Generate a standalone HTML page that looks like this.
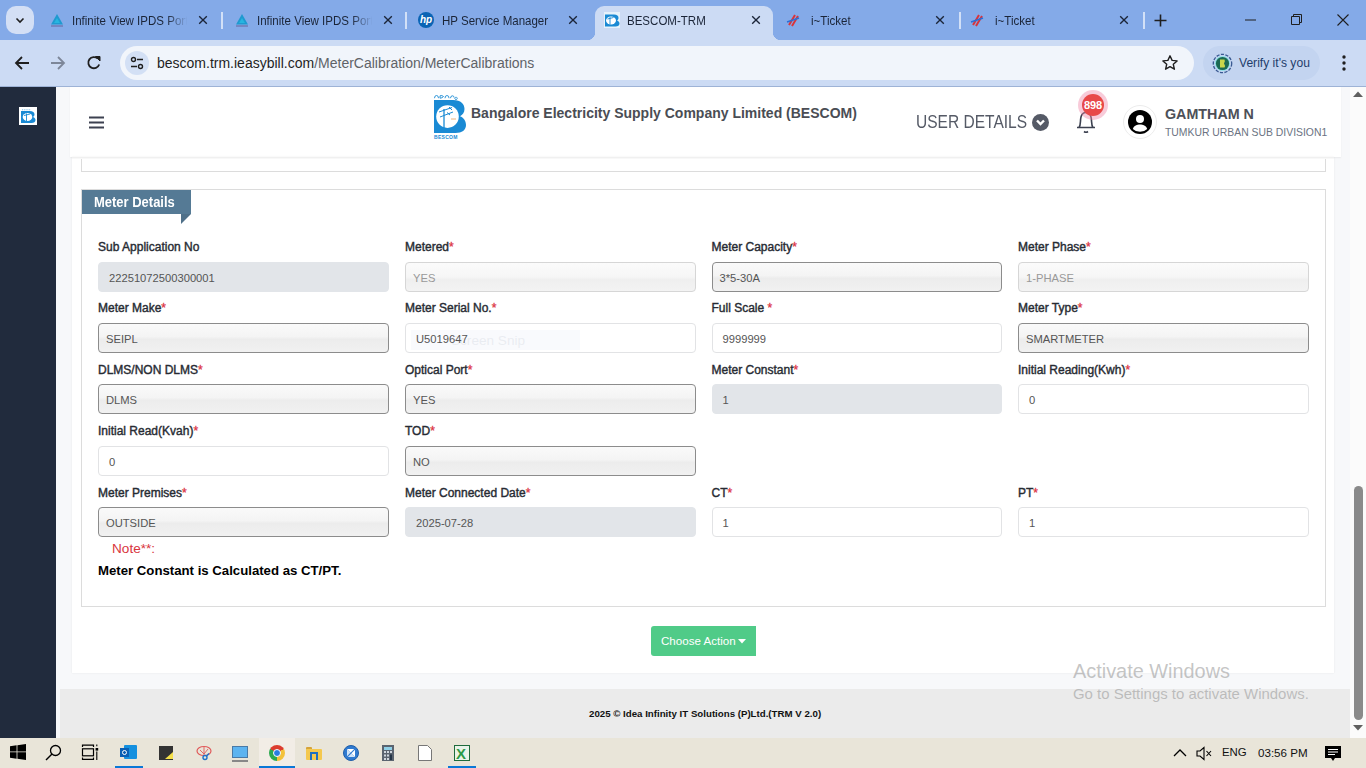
<!DOCTYPE html>
<html><head><meta charset="utf-8">
<style>
*{margin:0;padding:0;box-sizing:border-box}
html,body{width:1366px;height:768px;overflow:hidden;font-family:"Liberation Sans",sans-serif;background:#fff}
.a{position:absolute}
#tabs{left:0;top:0;width:1366px;height:40px;background:#84aae8}
#toolbar{left:0;top:40px;width:1366px;height:47px;background:#ccdbf4;border-bottom:1px solid #9eb3d6}
.tab{position:absolute;top:0;height:40px;font-size:12.4px;color:#1f1f1f}
.tab .t{position:absolute;top:13.5px;white-space:nowrap;overflow:hidden;color:#1b2538;transform:scaleX(0.93);transform-origin:0 0}
.tab .t.f{-webkit-mask-image:linear-gradient(to right,#000 82%,transparent 100%)}
.sep{position:absolute;top:12px;width:2px;height:17px;background:#d2e0f7}
#page{left:0;top:87px;width:1366px;height:651px;background:#f5f6fa;overflow:hidden}
#side{left:0;top:0;width:56px;height:651px;background:#1e293b}
#taskbar{left:0;top:738px;width:1366px;height:30px;background:#e9e5d9}
.lbl{position:absolute;font-size:12px;color:#272b33;-webkit-text-stroke:0.4px #272b33;white-space:nowrap}
.lbl i{font-style:normal;color:#dc3545;-webkit-text-stroke:0.3px #dc3545}
.inp{position:absolute;width:291px;height:30.4px;border:1px solid #e2e3e5;border-radius:4px;background:#fff;font-size:11.2px;color:#555;padding:8.5px 0 0 10px;white-space:nowrap}
.inp.ro{background:#e2e5e9;border-color:#e2e5e9}
.inp.sel{border-color:#8c8c8c;background:linear-gradient(#fafafa,#f4f4f4 45%,#ececec 55%,#f1f1f1);padding-left:7px}
.inp.dis{border-color:#d6d6d6;background:linear-gradient(#fbfbfb,#f6f6f6 50%,#efefef 60%,#f3f3f3);color:#999;padding-left:7px}
</style></head><body>
<!-- TAB STRIP -->
<div id="tabs" class="a">
  <div class="a" style="left:6px;top:6px;width:28px;height:28px;border-radius:10px;background:#d3dff5"></div>
  <svg class="a" style="left:14px;top:14px" width="12" height="12" viewBox="0 0 12 12"><path d="M2.5 4.5L6 8l3.5-3.5" stroke="#1f1f1f" stroke-width="1.6" fill="none"/></svg>

  <div class="tab" style="left:40px;width:182px">
    <svg class="a" style="left:9px;top:12px" width="16" height="16" viewBox="0 0 16 16"><path d="M8 2L14 12.5H2z" fill="#1f9ad0"/><path d="M8 6L11 11H5z" fill="#27b5e0"/><path d="M2 14H14" stroke="#6a6fa8" stroke-width="1.2"/></svg>
    <div class="t f" style="left:32px;width:124px">Infinite View IPDS Portal</div>
    <svg class="a" style="left:158px;top:15px" width="10" height="10" viewBox="0 0 10 10"><path d="M1.2 1.2L8.8 8.8M8.8 1.2L1.2 8.8" stroke="#1b2538" stroke-width="1.35"/></svg>
  </div>
  <div class="sep" style="left:221px"></div>
  <div class="tab" style="left:225px;width:182px">
    <svg class="a" style="left:9px;top:12px" width="16" height="16" viewBox="0 0 16 16"><path d="M8 2L14 12.5H2z" fill="#1f9ad0"/><path d="M8 6L11 11H5z" fill="#27b5e0"/><path d="M2 14H14" stroke="#6a6fa8" stroke-width="1.2"/></svg>
    <div class="t f" style="left:32px;width:124px">Infinite View IPDS Portal</div>
    <svg class="a" style="left:158px;top:15px" width="10" height="10" viewBox="0 0 10 10"><path d="M1.2 1.2L8.8 8.8M8.8 1.2L1.2 8.8" stroke="#1b2538" stroke-width="1.35"/></svg>
  </div>
  <div class="sep" style="left:405px"></div>
  <div class="tab" style="left:410px;width:182px">
    <div class="a" style="left:8px;top:12px;width:16px;height:16px;border-radius:50%;background:#0a64b4;color:#fff;font-size:10px;font-style:italic;font-weight:bold;text-align:center;line-height:16px">hp</div>
    <div class="t" style="left:32px;width:120px">HP Service Manager</div>
    <svg class="a" style="left:158px;top:15px" width="10" height="10" viewBox="0 0 10 10"><path d="M1.2 1.2L8.8 8.8M8.8 1.2L1.2 8.8" stroke="#1b2538" stroke-width="1.35"/></svg>
  </div>
  <!-- active tab -->
  <div class="a" style="left:595px;top:6px;width:178px;height:34px;background:#ccdbf4;border-radius:9px 9px 0 0"></div>
  <div class="a" style="left:587px;top:32px;width:8px;height:8px;background:radial-gradient(circle at 0 0,#84aae8 8px,#ccdbf4 8.5px)"></div>
  <div class="a" style="left:773px;top:32px;width:8px;height:8px;background:radial-gradient(circle at 100% 0,#84aae8 8px,#ccdbf4 8.5px)"></div>
  <div class="tab" style="left:595px;width:178px">
    <svg class="a" style="left:9px;top:12px" width="16" height="16" viewBox="0 0 16 16"><rect x="0" y="0" width="16" height="16" fill="#e6f2fb"/><path d="M1 2.5H10C13 2.5 14.5 4 14.5 6C14.5 7.3 13.8 8 13 8.5C14.5 9 15.5 10 15.5 11.5C15.5 13.5 14 14.5 11.5 14.5H1z" fill="#1a8ad4"/><ellipse cx="7" cy="8.5" rx="5" ry="4" fill="#fff"/><path d="M6 5V12.5M3.5 7L9.5 5.5" stroke="#1a8ad4" stroke-width="0.9"/></svg>
    <div class="t" style="left:32px;width:120px">BESCOM-TRM</div>
    <svg class="a" style="left:156px;top:15px" width="10" height="10" viewBox="0 0 10 10"><path d="M1.2 1.2L8.8 8.8M8.8 1.2L1.2 8.8" stroke="#1b2538" stroke-width="1.35"/></svg>
  </div>
  <div class="tab" style="left:777px;width:182px">
    <svg class="a" style="left:9px;top:12px" width="16" height="16" viewBox="0 0 16 16"><path d="M3 13L9 3M6 14L12 4" stroke="#d9343a" stroke-width="2"/><path d="M1 10L13 6" stroke="#2b6fd6" stroke-width="1.5"/></svg>
    <div class="t" style="left:34px;width:120px">i~Ticket</div>
    <svg class="a" style="left:158px;top:15px" width="10" height="10" viewBox="0 0 10 10"><path d="M1.2 1.2L8.8 8.8M8.8 1.2L1.2 8.8" stroke="#1b2538" stroke-width="1.35"/></svg>
  </div>
  <div class="sep" style="left:959px"></div>
  <div class="tab" style="left:961px;width:182px">
    <svg class="a" style="left:9px;top:12px" width="16" height="16" viewBox="0 0 16 16"><path d="M3 13L9 3M6 14L12 4" stroke="#d9343a" stroke-width="2"/><path d="M1 10L13 6" stroke="#2b6fd6" stroke-width="1.5"/></svg>
    <div class="t" style="left:34px;width:120px">i~Ticket</div>
    <svg class="a" style="left:158px;top:15px" width="10" height="10" viewBox="0 0 10 10"><path d="M1.2 1.2L8.8 8.8M8.8 1.2L1.2 8.8" stroke="#1b2538" stroke-width="1.35"/></svg>
  </div>
  <div class="sep" style="left:1143px"></div>
  <svg class="a" style="left:1154px;top:14px" width="13" height="13" viewBox="0 0 13 13"><path d="M6.5 0.5V12.5M0.5 6.5H12.5" stroke="#1f1f1f" stroke-width="1.6"/></svg>
  <svg class="a" style="left:1245px;top:19px" width="11" height="2" viewBox="0 0 11 2"><path d="M0 1H11" stroke="#1f1f1f" stroke-width="1"/></svg>
  <svg class="a" style="left:1291px;top:14px" width="11" height="11" viewBox="0 0 11 11"><path d="M0.5 2.5H8.5V10.5H0.5z M2.5 2.5V0.5H10.5V8.5H8.5" stroke="#1f1f1f" stroke-width="1" fill="none"/></svg>
  <svg class="a" style="left:1337px;top:14px" width="12" height="12" viewBox="0 0 12 12"><path d="M0.5 0.5L11.5 11.5M11.5 0.5L0.5 11.5" stroke="#1f1f1f" stroke-width="1.1"/></svg>
</div>

<!-- TOOLBAR -->
<div id="toolbar" class="a">
  <svg class="a" style="left:14px;top:15px" width="16" height="16" viewBox="0 0 16 16"><path d="M15 8H2M8 2L2 8l6 6" stroke="#1f1f1f" stroke-width="1.8" fill="none"/></svg>
  <svg class="a" style="left:50px;top:15px" width="16" height="16" viewBox="0 0 16 16"><path d="M1 8H14M8 2l6 6-6 6" stroke="#7d8799" stroke-width="1.8" fill="none"/></svg>
  <svg class="a" style="left:86px;top:15px" width="16" height="16" viewBox="0 0 16 16"><path d="M13.2 9.5A5.6 5.6 0 1 1 11.8 3.6" stroke="#1f1f1f" stroke-width="1.8" fill="none"/><path d="M9.5 1.5H14V6z" fill="#1f1f1f" stroke="#1f1f1f" stroke-width="1"/></svg>
  <div class="a" style="left:120px;top:6px;width:1074px;height:34px;border-radius:17px;background:#f1f5fb"></div>
  <div class="a" style="left:125px;top:11px;width:24px;height:24px;border-radius:12px;background:#d3e0f5"></div>
  <svg class="a" style="left:130px;top:16px" width="14" height="14" viewBox="0 0 14 14"><circle cx="3.5" cy="3.5" r="2" stroke="#1f1f1f" stroke-width="1.4" fill="none"/><path d="M7 3.5H13M1 10.5H7" stroke="#1f1f1f" stroke-width="1.4"/><circle cx="10.5" cy="10.5" r="2" stroke="#1f1f1f" stroke-width="1.4" fill="none"/></svg>
  <div class="a" style="left:157px;top:15px;font-size:14px;color:#1f1f1f;white-space:nowrap">bescom.trm.ieasybill.com<span style="color:#5f6368">/MeterCalibration/MeterCalibrations</span></div>
  <svg class="a" style="left:1161px;top:14px" width="18" height="18" viewBox="0 0 18 18"><path d="M9 1.8l2.1 4.6 5 .5-3.8 3.4 1.1 4.9L9 12.7l-4.4 2.5 1.1-4.9L1.9 6.9l5-.5z" stroke="#1f1f1f" stroke-width="1.4" fill="none" stroke-linejoin="round"/></svg>
  <div class="a" style="left:1203px;top:6px;width:117px;height:34px;border-radius:17px;background:#c3d4f0"></div>
  <svg class="a" style="left:1212px;top:13px" width="21" height="21" viewBox="0 0 21 21"><circle cx="10.5" cy="10.5" r="9.2" stroke="#3a5a92" stroke-width="1.3" fill="none" stroke-dasharray="3.2 1.4"/><circle cx="10.5" cy="10.5" r="7.6" fill="#8fe0e6"/><circle cx="10.5" cy="10.5" r="6.6" fill="#1c6a52"/><path d="M8 6.5H12.5Q13.5 8 12 10.5Q13.5 12.5 12.5 14.5H8z" fill="#c9d64a"/></svg>
  <div class="a" style="left:1239px;top:16px;font-size:12.1px;color:#1f3d6b;white-space:nowrap">Verify it's you</div>
  <svg class="a" style="left:1341px;top:14px" width="6" height="18" viewBox="0 0 6 18"><circle cx="3" cy="3" r="1.7" fill="#1f1f1f"/><circle cx="3" cy="9" r="1.7" fill="#1f1f1f"/><circle cx="3" cy="15" r="1.7" fill="#1f1f1f"/></svg>
</div>

<!-- PAGE -->
<div class="a" style="left:56px;top:87px;width:1294px;height:651px;background:#f7f8fa"></div>
<div class="a" style="left:0;top:87px;width:56px;height:651px;background:#212b3d"></div>
<div class="a" style="left:19px;top:107px;width:18px;height:18px;background:#fff"></div>
<svg class="a" style="left:21px;top:109px" width="15" height="15" viewBox="0 0 15 15"><path d="M0 2H8.5C12 2 13.5 3.5 13.5 5.5C13.5 6.8 12.8 7.5 12 8C13.5 8.5 14.5 9.5 14.5 11C14.5 13 13 14 10.5 14H0z" fill="#1a8ad4"/><ellipse cx="6.5" cy="8" rx="4.8" ry="4" fill="#fff"/><path d="M5.5 4.5V12M3 6.5L9 5" stroke="#1a8ad4" stroke-width="0.9"/><path d="M1 0.8H10" stroke="#1a8ad4" stroke-width="0.6" stroke-dasharray="1 0.8"/></svg>
<div class="a" style="left:70px;top:87px;width:1271px;height:70px;background:#fff;box-shadow:0 1px 1.5px rgba(0,0,0,0.06)"></div>
<div class="a" style="left:72px;top:157px;width:1262px;height:516px;background:#fff;box-shadow:0 0 2px rgba(0,0,0,0.07)"></div>
<div class="a" style="left:81px;top:157px;width:1245px;height:15px;border:1px solid #dcdcdc;border-top:none"></div>
<div class="a" style="left:72px;top:157px;width:1262px;height:1px;background:#f0f0f0"></div><div class="a" style="left:72px;top:158px;width:1262px;height:1px;background:#f8f8f8"></div>
<div class="a" style="left:81px;top:189px;width:1245px;height:418px;border:1px solid #dcdcdc"></div>
<div class="a" style="left:82px;top:190px;width:109px;height:24px;background:#557a95"></div><div class="a" style="left:94px;top:194px;color:#fff;font-weight:bold;font-size:14.5px;white-space:nowrap;transform:scaleX(0.895);transform-origin:0 0">Meter Details</div>
<svg class="a" style="left:181px;top:214px" width="10" height="10" viewBox="0 0 10 10"><path d="M0 0H10L0 10z" fill="#4f7089"/></svg>
<div class="lbl" style="left:98px;top:240px">Sub Application No<i></i></div>
<div class="inp ro" style="width:291px;left:98px;top:262px">22251072500300001</div>
<div class="lbl" style="left:405px;top:240px">Metered<i>*</i></div>
<div class="inp dis" style="width:290.7px;left:405px;top:262px">YES</div>
<div class="lbl" style="left:711.5px;top:240px">Meter Capacity<i>*</i></div>
<div class="inp sel" style="width:290px;left:711.5px;top:262px">3*5-30A</div>
<div class="lbl" style="left:1018px;top:240px">Meter Phase<i>*</i></div>
<div class="inp dis" style="width:290.8px;left:1018px;top:262px">1-PHASE</div>
<div class="lbl" style="left:98px;top:301px">Meter Make<i>*</i></div>
<div class="inp sel" style="width:291px;left:98px;top:323px">SEIPL</div>
<div class="lbl" style="left:405px;top:301px">Meter Serial No.<i>*</i></div>
<div class="inp " style="width:290.7px;left:405px;top:323px"><div class="a" style="left:5px;top:6px;width:169px;height:20px;background:rgba(235,240,250,0.3)"></div><div class="a" style="left:45px;top:9px;font-size:13.6px;color:rgba(205,210,220,0.35);white-space:nowrap">Screen Snip</div><span style="position:relative">U5019647</span></div>
<div class="lbl" style="left:711.5px;top:301px">Full Scale <i>*</i></div>
<div class="inp " style="width:290px;left:711.5px;top:323px">9999999</div>
<div class="lbl" style="left:1018px;top:301px">Meter Type<i>*</i></div>
<div class="inp sel" style="width:290.8px;left:1018px;top:323px">SMARTMETER</div>
<div class="lbl" style="left:98px;top:363px">DLMS/NON DLMS<i>*</i></div>
<div class="inp sel" style="width:291px;left:98px;top:384px">DLMS</div>
<div class="lbl" style="left:405px;top:363px">Optical Port<i>*</i></div>
<div class="inp sel" style="width:290.7px;left:405px;top:384px">YES</div>
<div class="lbl" style="left:711.5px;top:363px">Meter Constant<i>*</i></div>
<div class="inp ro" style="width:290px;left:711.5px;top:384px">1</div>
<div class="lbl" style="left:1018px;top:363px">Initial Reading(Kwh)<i>*</i></div>
<div class="inp " style="width:290.8px;left:1018px;top:384px">0</div>
<div class="lbl" style="left:98px;top:424px">Initial Read(Kvah)<i>*</i></div>
<div class="inp " style="width:291px;left:98px;top:446px">0</div>
<div class="lbl" style="left:405px;top:424px">TOD<i>*</i></div>
<div class="inp sel" style="width:290.7px;left:405px;top:446px">NO</div>
<div class="lbl" style="left:98px;top:486px">Meter Premises<i>*</i></div>
<div class="inp sel" style="width:291px;left:98px;top:507px">OUTSIDE</div>
<div class="lbl" style="left:405px;top:486px">Meter Connected Date<i>*</i></div>
<div class="inp ro" style="width:290.7px;left:405px;top:507px">2025-07-28</div>
<div class="lbl" style="left:711.5px;top:486px">CT<i>*</i></div>
<div class="inp " style="width:290px;left:711.5px;top:507px">1</div>
<div class="lbl" style="left:1018px;top:486px">PT<i>*</i></div>
<div class="inp " style="width:290.8px;left:1018px;top:507px">1</div>
<div class="a" style="left:112px;top:541px;font-size:13.6px;color:#d9363e;white-space:nowrap">Note**:</div>
<div class="a" style="left:98px;top:563px;font-size:13.2px;font-weight:bold;color:#000;white-space:nowrap">Meter Constant is Calculated as CT/PT.</div>
<div class="a" style="left:651px;top:626px;width:105px;height:30px;background:#50cb88;border-radius:3px 0 0 3px;color:#fff;font-size:11.6px;padding:8px 0 0 10px;white-space:nowrap">Choose Action<svg style="position:absolute;left:87px;top:13px" width="8" height="5" viewBox="0 0 8 5"><path d="M0 0H8L4 4.5z" fill="#fff"/></svg></div>
<div class="a" style="left:60px;top:689px;width:1290px;height:49px;background:#ebebeb"></div>
<div class="a" style="left:589px;top:708px;font-size:9.7px;font-weight:bold;color:#111;white-space:nowrap">2025 © Idea Infinity IT Solutions (P)Ltd.(TRM V 2.0)</div>
<div class="a" style="left:1350px;top:87px;width:16px;height:651px;background:#fbfbfb"></div>
<svg class="a" style="left:1353px;top:91px" width="10" height="6" viewBox="0 0 10 6"><path d="M0 6L5 0.5L10 6z" fill="#606060"/></svg>
<svg class="a" style="left:1353px;top:725px" width="10" height="6" viewBox="0 0 10 6"><path d="M0 0L5 5.5L10 0z" fill="#606060"/></svg>
<div class="a" style="left:1354px;top:486px;width:9px;height:234px;background:#8a8a8a;border-radius:5px"></div>
<div class="a" style="left:1073px;top:660px;font-size:19.9px;color:rgba(140,140,140,0.5);white-space:nowrap">Activate Windows</div>
<div class="a" style="left:1073px;top:685px;font-size:14.95px;color:rgba(140,140,140,0.5);white-space:nowrap">Go to Settings to activate Windows.</div>
<svg class="a" style="left:89px;top:116px" width="15" height="13" viewBox="0 0 15 13"><path d="M0 1.5H15M0 6.5H15M0 11.5H15" stroke="#3c4150" stroke-width="2.2"/></svg>
<svg class="a" style="left:433px;top:93px" width="36" height="48" viewBox="0 0 36 48"><g fill="#1a8ad4"><path d="M1.5 5.2Q1.5 2.5 3.5 2.5Q5.5 2.5 5.5 5.2M7 5.2V2.8Q9 2 10.5 3.5Q9 5.2 7 5.2M12 5.2Q12 2.5 14 2.5Q16 2.5 16 5.2M17.5 5.2Q17.5 2.8 19.5 2.8Q21 2.8 21 4.5M23 4.2A1.2 1.2 0 1 0 23.1 4.2" stroke="#1a8ad4" stroke-width="0.9" fill="none"/><path d="M1 7H20C28 7 31.5 11 31.5 16C31.5 19.5 29.5 22 27 23.3C30.5 24.5 33 28 33 32C33 37 29 40 22.5 40H1z"/><text x="1" y="46" font-size="5" font-weight="bold" font-family="Liberation Sans" letter-spacing="0.3">BESCOM</text></g><circle cx="14.5" cy="23.6" r="11.3" fill="#fff"/><g stroke="#1a8ad4" fill="none"><path d="M11 16V35" stroke-width="1.3"/><path d="M6 19L19 14.5M7 24L20 19M16 14L19 17M14 19.5l3 2.5" stroke-width="1"/><path d="M18 26H23" stroke="#e8a05a" stroke-width="0.8"/></g></svg>
<div class="a" style="left:471px;top:104.5px;font-size:14px;font-weight:bold;color:#4a4d54;white-space:nowrap">Bangalore Electricity Supply Company Limited (BESCOM)</div>
<div class="a" style="left:916px;top:111px;font-size:18.5px;color:#555a66;white-space:nowrap;transform:scaleX(0.84);transform-origin:0 0">USER DETAILS</div>
<div class="a" style="left:1032px;top:114px;width:17px;height:17px;border-radius:50%;background:#555a66"></div>
<svg class="a" style="left:1035px;top:118px" width="11" height="9" viewBox="0 0 11 9"><path d="M2 2.5L5.5 6L9 2.5" stroke="#fff" stroke-width="2.4" fill="none"/></svg>
<svg class="a" style="left:1074px;top:108px" width="24" height="26" viewBox="0 0 24 26"><path d="M3 19.5H21M5 19.5C7 17 6 13 7 9C8 5 10 4.5 12 4.5C14 4.5 16 5 17 9C18 13 17 17 19 19.5" stroke="#3c4150" stroke-width="1.6" fill="none"/><path d="M10 23.5Q12 25 14 23.5" stroke="#3c4150" stroke-width="1.6" fill="none"/></svg>
<div class="a" style="left:1078px;top:90px;width:30px;height:30px;border-radius:50%;background:rgba(240,140,170,0.45)"></div>
<div class="a" style="left:1082px;top:94px;width:22px;height:22px;border-radius:50%;background:#e84848;color:#fff;font-weight:bold;font-size:11px;letter-spacing:-0.2px;text-align:center;line-height:22px">898</div>
<div class="a" style="left:1123px;top:105px;width:34px;height:34px;border-radius:50%;border:1px solid #ececec;background:#fff"></div>
<svg class="a" style="left:1128px;top:110px" width="24" height="24" viewBox="0 0 24 24"><circle cx="12" cy="12" r="12" fill="#000"/><circle cx="12" cy="9" r="4" fill="#fff"/><path d="M4.8 19C6 15.5 9 14.5 12 14.5S18 15.5 19.2 19Q16.5 21.8 12 21.8T4.8 19z" fill="#fff"/></svg>
<div class="a" style="left:1165px;top:106px;font-size:14.3px;font-weight:bold;color:#4d5058;white-space:nowrap">GAMTHAM N</div>
<div class="a" style="left:1165px;top:127px;font-size:10.4px;color:#6b7382;white-space:nowrap">TUMKUR URBAN SUB DIVISION1</div>

<!-- TASKBAR -->
<div id="taskbar" class="a">
  <svg class="a" style="left:10px;top:6px" width="16" height="16" viewBox="0 0 16 16"><path d="M0 2.2L6.6 1.3V7.5H0zM7.4 1.2L16 0V7.5H7.4zM0 8.3H6.6V14.7L0 13.8zM7.4 8.3H16V16L7.4 14.8z" fill="#000"/></svg>
  <svg class="a" style="left:45px;top:6px" width="17" height="17" viewBox="0 0 17 17"><circle cx="10.5" cy="6.5" r="5" stroke="#000" stroke-width="1.3" fill="none"/><path d="M7 10L1 16" stroke="#000" stroke-width="1.5"/></svg>
  <svg class="a" style="left:81px;top:6px" width="18" height="17" viewBox="0 0 18 17"><path d="M1.5 3V1.2H12.5V3M1.5 13.5V15.3H12.5V13.5" stroke="#000" stroke-width="1.2" fill="none"/><rect x="1.5" y="4.8" width="11" height="7" stroke="#000" stroke-width="1.2" fill="none"/><path d="M15.8 0.5V2.2M15.8 7.5V16" stroke="#000" stroke-width="1.1"/><rect x="14.6" y="4" width="2.6" height="2.6" fill="#000"/></svg>
  <!-- outlook -->
  <div class="a" style="left:124px;top:7px;width:13px;height:14px;background:#1490df;border-radius:1px"></div>
  <div class="a" style="left:120px;top:10px;width:9px;height:9px;background:#0a5fb4"></div>
  <div class="a" style="left:122px;top:12px;width:5px;height:5px;border-radius:50%;border:1.2px solid #fff"></div>
  <div class="a" style="left:115px;top:28px;width:28px;height:2px;background:#0a78d7"></div>
  <!-- sticky -->
  <div class="a" style="left:159px;top:8px;width:14px;height:14px;background:#333"></div>
  <svg class="a" style="left:165px;top:14px" width="8" height="7" viewBox="0 0 8 7"><path d="M8 0V7H0z" fill="#f5e04a"/></svg>
  <!-- snip -->
  <svg class="a" style="left:196px;top:7px" width="17" height="16" viewBox="0 0 17 16"><ellipse cx="8" cy="6" rx="7" ry="4.5" stroke="#e05a5a" stroke-width="1.2" fill="none"/><path d="M8 2V10M4 5L8 9M12 4L8 9" stroke="#e05a5a" stroke-width="0.9"/><circle cx="9" cy="12.5" r="2" stroke="#1f72c9" stroke-width="1.4" fill="none"/><path d="M10.5 11L13 8.5" stroke="#1f72c9" stroke-width="1.4"/></svg>
  <!-- monitor -->
  <div class="a" style="left:232px;top:8px;width:16px;height:12px;background:#5db4f0;border:1px solid #4a7aa6"></div>
  <div class="a" style="left:232px;top:22px;width:16px;height:1.5px;background:#888"></div>
  <!-- chrome active -->
  <div class="a" style="left:259px;top:0;width:36px;height:30px;background:#f2ede6"></div>
  <div class="a" style="left:259px;top:28px;width:36px;height:2px;background:#0a78d7"></div>
  <div class="a" style="left:269px;top:7px;width:16px;height:16px;border-radius:50%;background:conic-gradient(from -60deg,#db3d2f 0 120deg,#f3c13a 120deg 240deg,#2da94f 240deg 360deg)"></div>
  <div class="a" style="left:273px;top:11px;width:8px;height:8px;border-radius:50%;background:#2a7de1;border:1.3px solid #fff"></div>
  <!-- explorer -->
  <div class="a" style="left:306px;top:9px;width:6px;height:3px;background:#d6a43a;border-radius:1px"></div>
  <div class="a" style="left:306px;top:11px;width:16px;height:11px;background:#f4c84e;border-radius:1px"></div>
  <div class="a" style="left:310px;top:14px;width:8px;height:8px;border:2.2px solid #1e6fc0;border-bottom:none"></div>
  <!-- blue circle -->
  <div class="a" style="left:343px;top:7px;width:16px;height:16px;border-radius:50%;background:#2f7ad0;border:1px solid #1f5ea8"></div>
  <svg class="a" style="left:347px;top:11px" width="8" height="8" viewBox="0 0 8 8"><path d="M0 0H8V8z" fill="#fff"/><path d="M0 0V8H8z" fill="#cfe3f8"/><path d="M0 8L8 0" stroke="#2f7ad0" stroke-width="1.2"/></svg>
  <!-- calculator -->
  <div class="a" style="left:382px;top:7px;width:12px;height:16px;background:#5b6470"></div>
  <div class="a" style="left:384px;top:9px;width:8px;height:2.5px;background:#8fd0e8"></div>
  <svg class="a" style="left:384px;top:13px" width="8" height="9" viewBox="0 0 8 9"><g fill="#cfd6de"><rect x="0" y="0" width="2" height="2"/><rect x="3" y="0" width="2" height="2"/><rect x="6" y="0" width="2" height="2"/><rect x="0" y="3.5" width="2" height="2"/><rect x="3" y="3.5" width="2" height="2"/><rect x="0" y="7" width="2" height="2"/><rect x="3" y="7" width="2" height="2"/></g><rect x="6" y="3.5" width="2" height="5.5" fill="#243447"/></svg>
  <!-- file -->
  <svg class="a" style="left:418px;top:7px" width="14" height="16" viewBox="0 0 14 16"><path d="M0.5 0.5H9.5L13.5 4.5V15.5H0.5z" fill="#fff" stroke="#777" stroke-width="1"/></svg>
  <!-- excel -->
  <div class="a" style="left:454px;top:7px;width:16px;height:16px;background:#e9f3e9;border:1px solid #1f6b3c"></div>
  <div class="a" style="left:456px;top:8px;font-size:15px;font-weight:bold;color:#2c9a47;line-height:15px">X</div>
  <div class="a" style="left:448px;top:28px;width:28px;height:2px;background:#0a78d7"></div>
  <!-- tray -->
  <svg class="a" style="left:1173px;top:11px" width="14" height="8" viewBox="0 0 14 8"><path d="M1 7L7 1L13 7" stroke="#000" stroke-width="1.3" fill="none"/></svg>
  <svg class="a" style="left:1196px;top:8px" width="16" height="15" viewBox="0 0 16 15"><path d="M1 5H4L8 1.5V13.5L4 10H1z" stroke="#000" stroke-width="1.1" fill="none"/><path d="M10.5 5L15 10M15 5L10.5 10" stroke="#000" stroke-width="1.1"/></svg>
  <div class="a" style="left:1222px;top:8px;font-size:11.4px;color:#111">ENG</div>
  <div class="a" style="left:1258px;top:8px;font-size:11.6px;color:#111">03:56 PM</div>
  <svg class="a" style="left:1324px;top:7px" width="18" height="18" viewBox="0 0 18 18"><path d="M1 1H17V13H11L9 16L7 13H1z" fill="#000"/><path d="M4 4.5H14M4 7H14M4 9.5H11" stroke="#fff" stroke-width="1.1"/></svg>
</div>
</body></html>
